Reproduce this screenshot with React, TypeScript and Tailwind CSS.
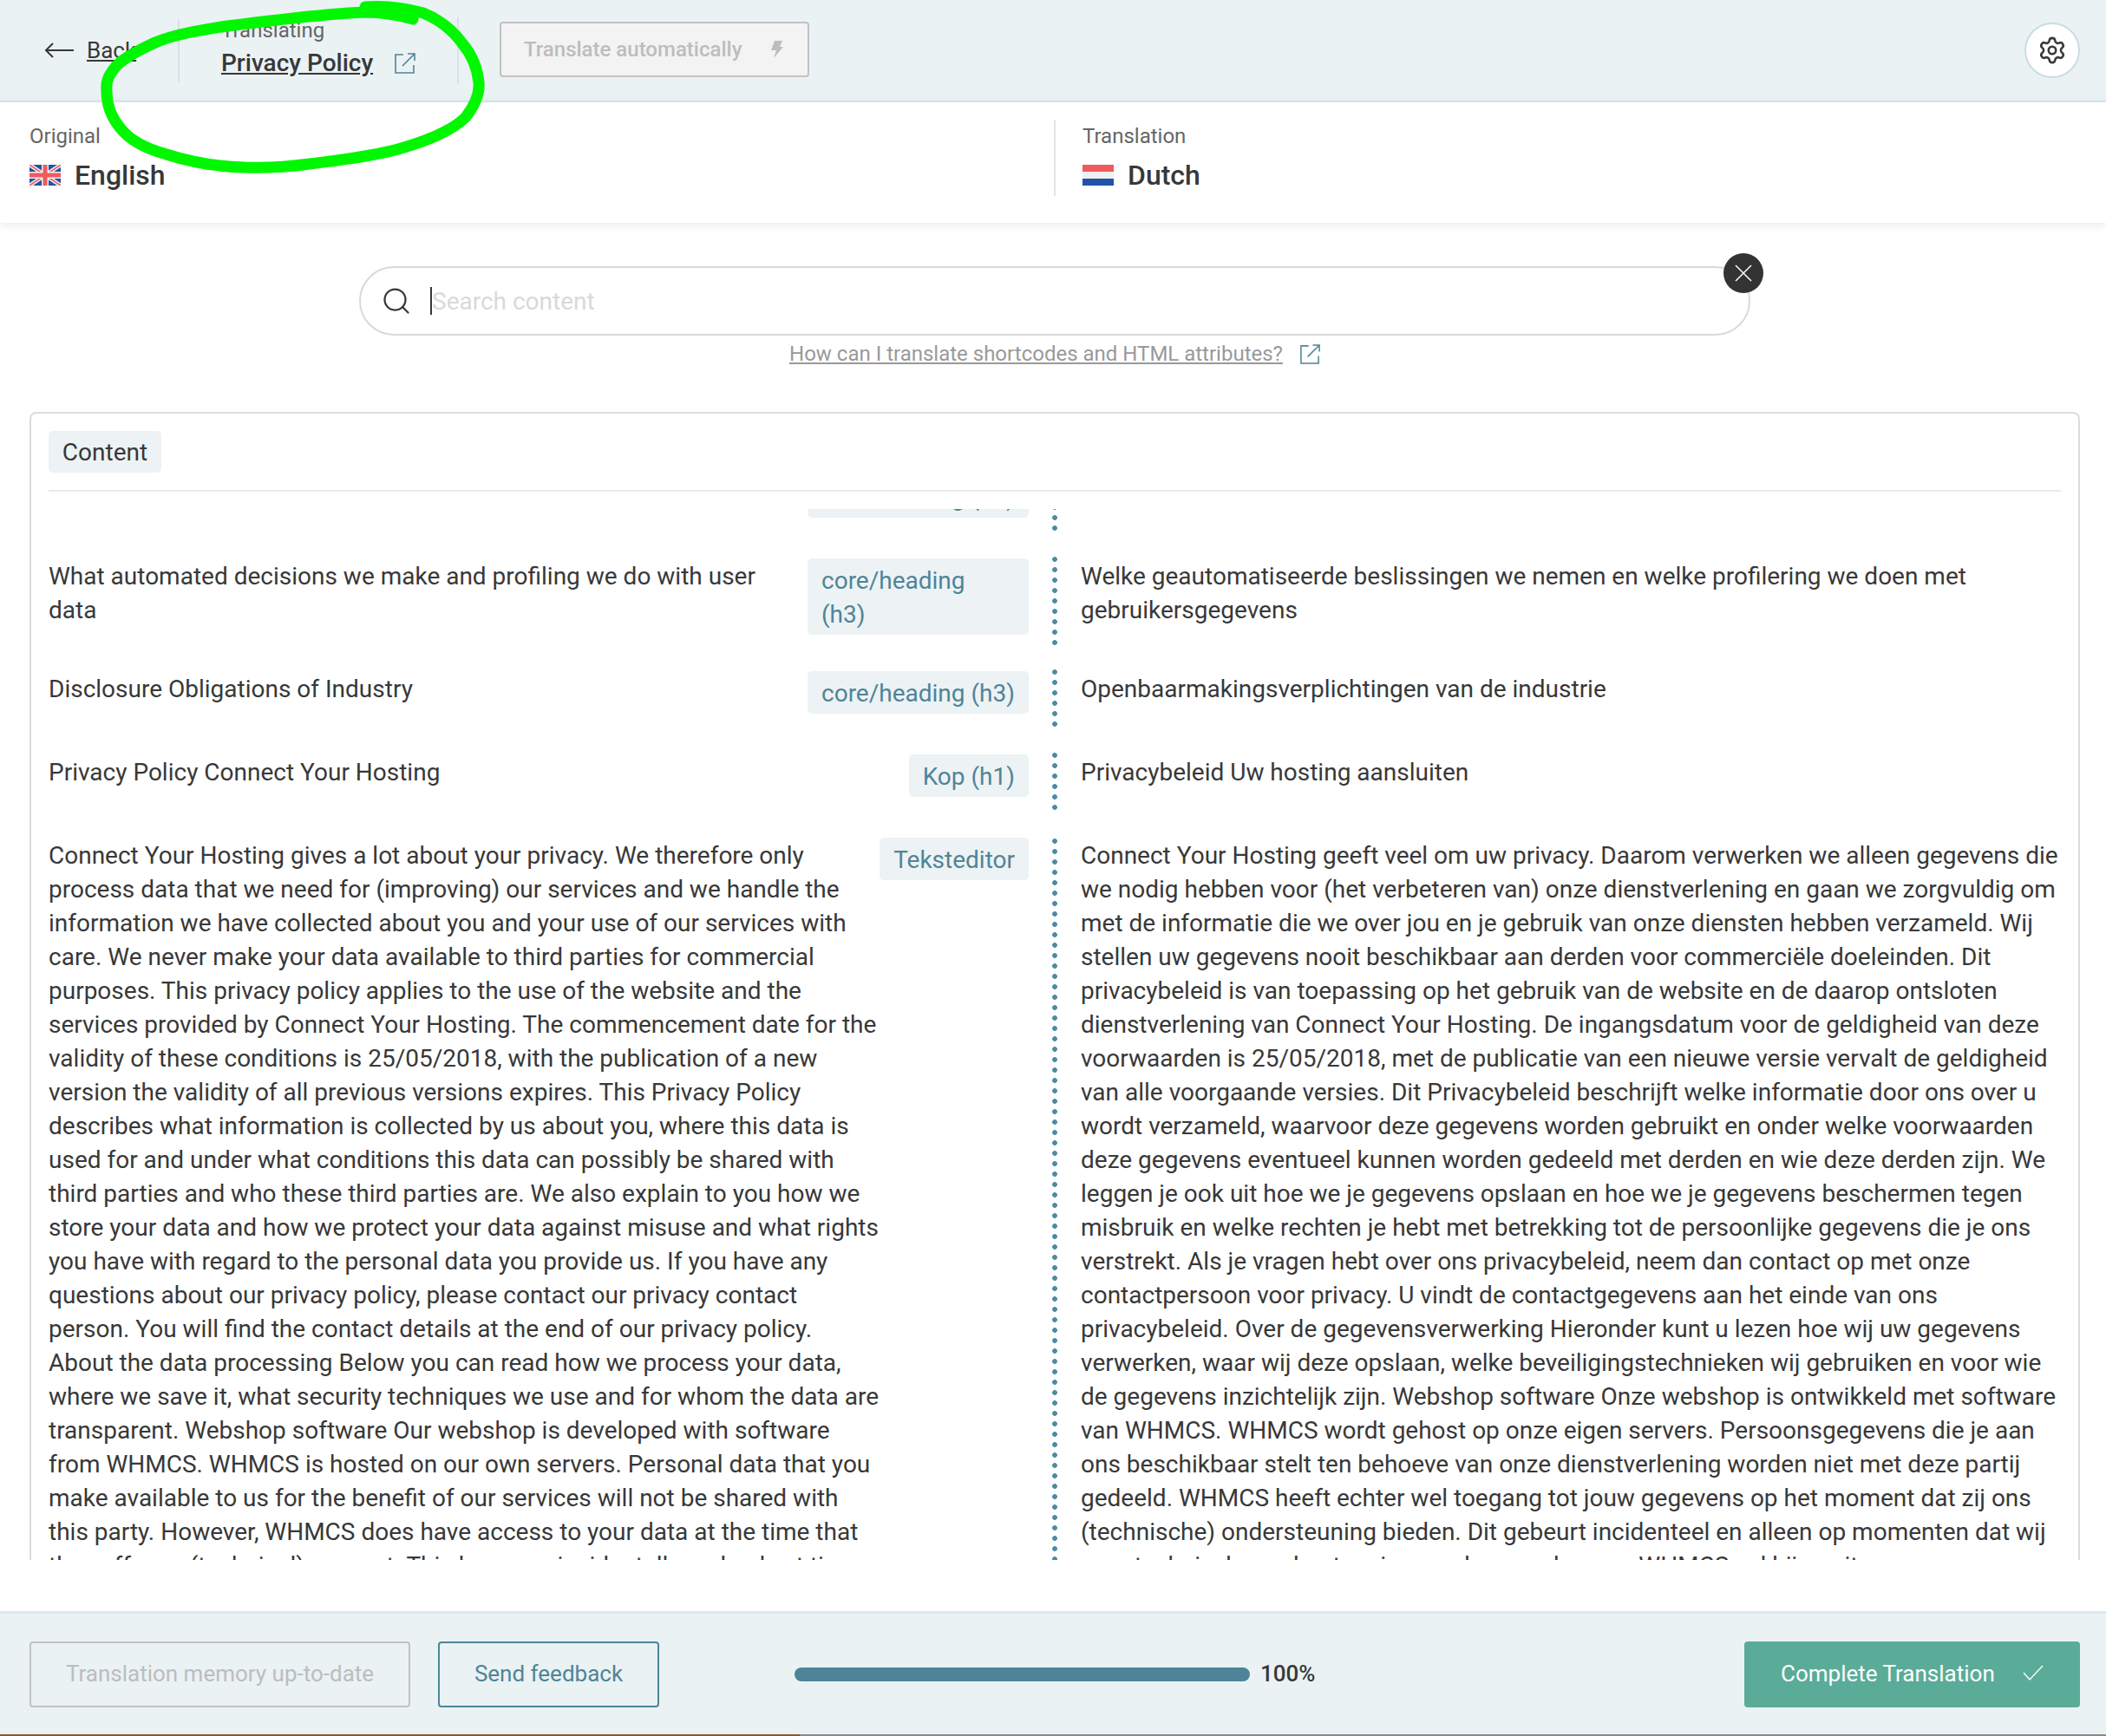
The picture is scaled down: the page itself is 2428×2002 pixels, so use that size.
import type { ReactNode } from "react";
import { Settings, Search } from "lucide-react";

const leftLong =
  "Connect Your Hosting gives a lot about your privacy. We therefore only process data that we need for (improving) our services and we handle the information we have collected about you and your use of our services with care. We never make your data available to third parties for commercial purposes. This privacy policy applies to the use of the website and the services provided by Connect Your Hosting. The commencement date for the validity of these conditions is 25/05/2018, with the publication of a new version the validity of all previous versions expires. This Privacy Policy describes what information is collected by us about you, where this data is used for and under what conditions this data can possibly be shared with third parties and who these third parties are. We also explain to you how we store your data and how we protect your data against misuse and what rights you have with regard to the personal data you provide us. If you have any questions about our privacy policy, please contact our privacy contact person. You will find the contact details at the end of our privacy policy. About the data processing Below you can read how we process your data, where we save it, what security techniques we use and for whom the data are transparent. Webshop software Our webshop is developed with software from WHMCS. WHMCS is hosted on our own servers. Personal data that you make available to us for the benefit of our services will not be shared with this party. However, WHMCS does have access to your data at the time that they offer us (technical) support. This happens incidentally and only at times";

const rightLong =
  "Connect Your Hosting geeft veel om uw privacy. Daarom verwerken we alleen gegevens die we nodig hebben voor (het verbeteren van) onze dienstverlening en gaan we zorgvuldig om met de informatie die we over jou en je gebruik van onze diensten hebben verzameld. Wij stellen uw gegevens nooit beschikbaar aan derden voor commerciële doeleinden. Dit privacybeleid is van toepassing op het gebruik van de website en de daarop ontsloten dienstverlening van Connect Your Hosting. De ingangsdatum voor de geldigheid van deze voorwaarden is 25/05/2018, met de publicatie van een nieuwe versie vervalt de geldigheid van alle voorgaande versies. Dit Privacybeleid beschrijft welke informatie door ons over u wordt verzameld, waarvoor deze gegevens worden gebruikt en onder welke voorwaarden deze gegevens eventueel kunnen worden gedeeld met derden en wie deze derden zijn. We leggen je ook uit hoe we je gegevens opslaan en hoe we je gegevens beschermen tegen misbruik en welke rechten je hebt met betrekking tot de persoonlijke gegevens die je ons verstrekt. Als je vragen hebt over ons privacybeleid, neem dan contact op met onze contactpersoon voor privacy. U vindt de contactgegevens aan het einde van ons privacybeleid. Over de gegevensverwerking Hieronder kunt u lezen hoe wij uw gegevens verwerken, waar wij deze opslaan, welke beveiligingstechnieken wij gebruiken en voor wie de gegevens inzichtelijk zijn. Webshop software Onze webshop is ontwikkeld met software van WHMCS. WHMCS wordt gehost op onze eigen servers. Persoonsgegevens die je aan ons beschikbaar stelt ten behoeve van onze dienstverlening worden niet met deze partij gedeeld. WHMCS heeft echter wel toegang tot jouw gegevens op het moment dat zij ons (technische) ondersteuning bieden. Dit gebeurt incidenteel en alleen op momenten dat wij voor technische ondersteuning een beroep doen op WHMCS zal hij nooit gegevens aan uitgeven voor";

function ExternalIcon({ className }: { className: string }) {
  return (
    <svg viewBox="0 0 26 26" fill="none" stroke="#4f8498" strokeWidth="1.6" className={className}>
      <path d="M11 3H2v21h21v-9" />
      <path d="M10 16 24 2M16 2h8v8" />
    </svg>
  );
}

function UkFlag() {
  return (
    <svg viewBox="0 0 36 24" className="w-[36px] h-[24px]">
      <rect width="36" height="24" fill="#2152a8" />
      <path d="M0 0 36 24M36 0 0 24" stroke="#f1f1f1" strokeWidth="4.5" />
      <path d="M0 0 36 24M36 0 0 24" stroke="#ef5a5f" strokeWidth="1.6" />
      <path d="M18 0v24M0 12h36" stroke="#f1f1f1" strokeWidth="8" />
      <path d="M18 0v24M0 12h36" stroke="#ef5a5f" strokeWidth="5" />
    </svg>
  );
}

function NlFlag() {
  return (
    <div className="w-[36px] h-[24px] flex flex-col">
      <div className="h-[8px] bg-[#ef5a5f]" />
      <div className="h-[8px] bg-[#f0f0f0]" />
      <div className="h-[8px] bg-[#2152a8]" />
    </div>
  );
}

function Tag({ children, className = "" }: { children: ReactNode; className?: string }) {
  return (
    <div className={`rounded-[5px] bg-[#edf2f4] px-[16px] pt-[6px] pb-[4px] text-[#4f8498] leading-[39px] ${className}`}>
      {children}
    </div>
  );
}

// the dotted line between the two columns, one dot per 12px
function DotLine({ className }: { className: string }) {
  return (
    <div className={`w-[6px] ml-[27px] shrink-0 bg-[radial-gradient(circle_at_center,#4d8aa3_2.5px,transparent_3.2px)] bg-[length:6px_12px] ${className}`} />
  );
}

function Row({ left, right, tag, rowClass, dotClass }: { left: string; right: string; tag: ReactNode; rowClass: string; dotClass: string }) {
  return (
    <div className={`flex ${rowClass}`}>
      <div className="w-[1130px] flex items-start justify-between">
        <div className="w-[860px] mt-[1px]">{left}</div>
        <Tag className="w-[255px] shrink-0">{tag}</Tag>
      </div>
      <DotLine className={dotClass} />
      <div className="w-[1157px] pl-[27px] mt-[1px]">{right}</div>
    </div>
  );
}

export default function App() {
  return (
    <div className="relative w-[2428px] h-[2002px] flex flex-col overflow-hidden bg-white font-['Roboto',sans-serif] text-[28px] leading-[39px] text-[#383838]">
      {/* top bar */}
      <header className="h-[118px] shrink-0 flex items-center bg-[#eaf2f4] border-b-2 border-[#dce8ee] pl-[51px] pr-[30px]">
        <div className="flex items-center gap-[15px] w-[154px]">
          <svg viewBox="0 0 34 20" fill="none" stroke="#383838" strokeWidth="2" className="w-[34px] h-[20px]">
            <path d="M34 10H2M10 2 2 10l8 8" />
          </svg>
          <a className="underline text-[26px]">Back</a>
        </div>
        <div className="w-[2px] h-[72px] bg-[#d5e2e7]" />
        <div className="w-[320px] pl-[48px] -mt-[5px]">
          <div className="text-[24px] leading-[30px] text-[#666]">Translating</div>
          <div className="flex items-center gap-[24px] mt-[5px] leading-[36px]">
            <a className="underline font-medium text-[28px]">Privacy Policy</a>
            <ExternalIcon className="w-[26px] h-[26px]" />
          </div>
        </div>
        <div className="w-[2px] h-[76px] bg-[#d5e2e7]" />
        <button className="ml-[47px] -mt-[2px] w-[357px] h-[64px] flex items-center justify-between pl-[26px] pr-[28px] rounded-[4px] border-2 border-[#c2c2c2] bg-[#f3f3f3] text-[24px] font-medium text-[#bdbdbd]">
          Translate automatically
          <svg viewBox="0 0 16 20" fill="#bdbdbd" className="w-[16px] h-[20px]">
            <path d="M6 0h9l-3 7h4L5 20l3-9H2z" />
          </svg>
        </button>
        <button className="ml-auto w-[64px] h-[64px] rounded-full bg-white border-2 border-[#c9dde4] flex items-center justify-center">
          <Settings size={34} strokeWidth={1.8} color="#383838" />
        </button>
      </header>

      {/* language bar */}
      <div className="h-[139px] shrink-0 flex items-center bg-white shadow-[0_2px_10px_rgba(60,90,110,0.14)] z-10 pl-[34px] pb-[11px]">
        <div className="w-[1181px] pt-[2px]">
          <div className="text-[24px] leading-[30px] text-[#666]">Original</div>
          <div className="flex items-center gap-[16px] mt-[8px] text-[32px] leading-[44px] font-medium">
            <UkFlag />
            English
          </div>
        </div>
        <div className="w-[2px] h-[88px] bg-[#e3e3e3]" />
        <div className="pl-[31px] pt-[2px]">
          <div className="text-[24px] leading-[30px] text-[#666]">Translation</div>
          <div className="flex items-center gap-[16px] mt-[8px] text-[32px] leading-[44px] font-medium">
            <NlFlag />
            Dutch
          </div>
        </div>
      </div>

      {/* search */}
      <div className="relative flex-1 flex flex-col min-h-0">
        <div className="relative mt-[50px] ml-[414px] w-[1604px] h-[80px] shrink-0 rounded-full border-2 border-[#d9d9d9] flex items-center pl-[23px]">
          <Search size={36} strokeWidth={1.5} color="#383838" />
          <div className="ml-[21px] w-[2px] h-[32px] bg-[#383838]" />
          <span className="text-[#d9d9d9]">Search content</span>
          <button className="absolute right-[-17px] top-[-17px] w-[46px] h-[46px] rounded-full bg-[#333] flex items-center justify-center">
            <svg viewBox="0 0 22 22" stroke="#fff" strokeWidth="1.5" className="w-[22px] h-[22px]">
              <path d="M2 2 20 20M20 2 2 20" />
            </svg>
          </button>
        </div>
        <div className="mt-[6px] shrink-0 flex items-center justify-center gap-[19px] pl-[5px] text-[24px] leading-[30px] text-[#999]">
          <a className="underline">How can I translate shortcodes and HTML attributes?</a>
          <ExternalIcon className="w-[25px] h-[25px]" />
        </div>

        {/* content card */}
        <div className="mt-[52px] ml-[34px] mr-[30px] h-[1324px] shrink-0 rounded-t-[8px] border-2 border-b-0 border-[#dcdcdc] pl-[20px] pr-[20px] pt-[20px] flex flex-col">
          <div className="shrink-0 pb-[20px] border-b-2 border-[#e9e9e9]">
            <div className="w-[130px] h-[48px] rounded-[5px] bg-[#edf2f4] flex items-center justify-center">Content</div>
          </div>
          <div className="mt-[20px] flex-1 min-h-0 overflow-hidden">
            <div className="flex h-[57px] overflow-hidden">
              <div className="w-[1130px] flex justify-end">
                <Tag className="w-[255px] h-[49px] -mt-[39px]">core/heading (h3)</Tag>
              </div>
              <DotLine className="h-[33px] -mt-[8px]" />
            </div>
            <Row
              rowClass="h-[130px]"
              dotClass="h-[108px] -mt-[5px]"
              left="What automated decisions we make and profiling we do with user data"
              tag={
                <>
                  core/heading
                  <br />
                  (h3)
                </>
              }
              right="Welke geautomatiseerde beslissingen we nemen en welke profilering we doen met gebruikersgegevens"
            />
            <Row
              rowClass="h-[96px]"
              dotClass="h-[72px] -mt-[5px]"
              left="Disclosure Obligations of Industry"
              tag="core/heading (h3)"
              right="Openbaarmakingsverplichtingen van de industrie"
            />
            <div className="flex h-[96px]">
              <div className="w-[1130px] flex items-start justify-between">
                <div className="mt-[1px]">Privacy Policy Connect Your Hosting</div>
                <Tag>Kop (h1)</Tag>
              </div>
              <DotLine className="h-[72px] -mt-[5px]" />
              <div className="w-[1157px] pl-[27px] mt-[1px]">Privacybeleid Uw hosting aansluiten</div>
            </div>
            <div className="flex">
              <div className="w-[1130px] flex items-start justify-between">
                <div className="w-[960px] mt-[1px]">{leftLong}</div>
                <Tag>Teksteditor</Tag>
              </div>
              <DotLine className="self-stretch -mt-[2px]" />
              <div className="w-[1157px] pl-[27px] mt-[1px]">{rightLong}</div>
            </div>
          </div>
        </div>
      </div>

      {/* footer */}
      <footer className="h-[142px] shrink-0 flex items-center bg-[#eaf2f4] border-t-[3px] border-[#dce8ee] pl-[34px] pr-[30px] text-[26px]">
        <button className="w-[439px] h-[76px] rounded-[4px] border-2 border-[#c2c2c2] text-[#bdbdbd]">Translation memory up-to-date</button>
        <button className="ml-[32px] w-[255px] h-[76px] rounded-[4px] border-2 border-[#4f8498] text-[#4f8498]">Send feedback</button>
        <div className="ml-[156px] w-[525px] h-[16px] rounded-full bg-[#4f8498]" />
        <span className="ml-[12px] font-medium">100%</span>
        <button className="ml-auto w-[387px] h-[76px] rounded-[4px] bg-[#5aac98] text-white flex items-center pl-[42px] gap-[32px]">
          Complete Translation
          <svg viewBox="0 0 24 18" fill="none" stroke="#fff" strokeWidth="1.3" className="w-[24px] h-[18px] -mt-[4px]">
            <path d="M1 9l7 8L23 1" />
          </svg>
        </button>
      </footer>
      <div className="h-[2px] shrink-0 flex">
        <div className="w-[922px] bg-[#8a5a2b]" />
        <div className="flex-1 bg-[#8a8a8a]" />
      </div>

      {/* hand drawn highlight over the top */}
      <svg viewBox="0 0 2428 2002" fill="none" className="absolute inset-0 w-[2428px] h-[2002px] pointer-events-none z-20">
        <path
          d="M476 22C455 16 440 14 421 14C370 16 310 24 255 31C225 36 200 40 179 49C155 60 140 70 134 76C124 88 122 95 123 105C123 120 128 135 139 148C150 162 170 172 192 178C220 187 250 192 281 193C310 194 335 192 357 189C395 184 430 180 459 172C495 162 522 150 537 135C550 118 553 105 552 95C550 75 543 62 533 50C520 32 505 22 488 15C470 10 445 6 421 8"
          stroke="#00f700"
          strokeWidth="13"
          strokeLinecap="round"
          strokeLinejoin="round"
        />
      </svg>
    </div>
  );
}
